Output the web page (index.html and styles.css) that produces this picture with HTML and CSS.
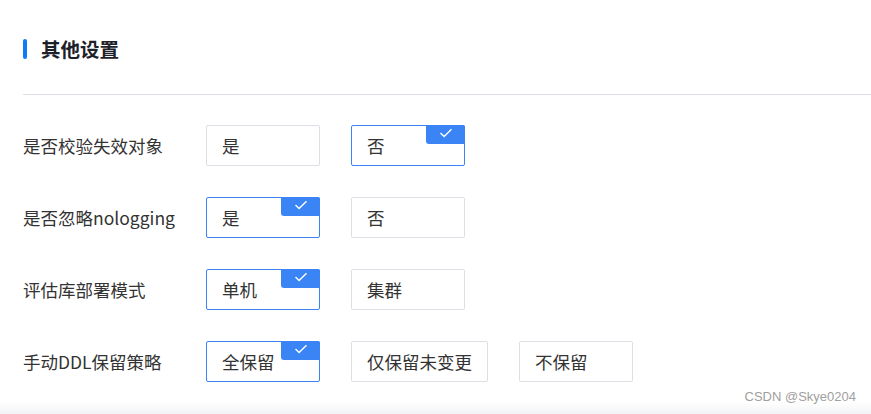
FILE: index.html
```html
<!DOCTYPE html>
<html lang="zh-CN">
<head>
    <meta charset="UTF-8">
    <meta name="viewport" content="width=device-width, initial-scale=1.0">
    <title>其他设置</title>
    <link rel="stylesheet" href="styles.css">
</head>
<body>
    <div class="panel">
        <!-- 标题 -->
        <div class="panel-title">
            <span class="title-bar"></span>
            <h2>其他设置</h2>
        </div>
        <div class="divider"></div>

        <div class="form-row">
            <div class="label">是否校验失效对象</div>
            <div class="options">
                <div class="option">是</div>
                <div class="option checked">否</div>
            </div>
        </div>
        <div class="form-row">
            <div class="label">是否忽略nologging</div>
            <div class="options">
                <div class="option checked">是</div>
                <div class="option">否</div>
            </div>
        </div>
        <div class="form-row">
            <div class="label">评估库部署模式</div>
            <div class="options">
                <div class="option checked">单机</div>
                <div class="option">集群</div>
            </div>
        </div>
        <div class="form-row">
            <div class="label">手动DDL保留策略</div>
            <div class="options">
                <div class="option checked">全保留</div>
                <div class="option">仅保留未变更</div>
                <div class="option">不保留</div>
            </div>
        </div>
    </div>
    <div class="footer"></div>
    <span class="watermark">CSDN @Skye0204</span>
</body>
</html>
```

FILE: styles.css
```css
html, body {
    height: 100%;
    overflow: hidden;
}
body {
    position: relative;
    margin: 0;
    background: #fff;
    font-family: "Noto Sans CJK SC", "Noto Sans", sans-serif;
    color: #333;
}
.panel {
    padding: 39px 0 0 23px;
}
.panel-title {
    display: flex;
    align-items: center;
    height: 20px;
}
.title-bar {
    width: 4px;
    height: 20px;
    border-radius: 2px;
    background-color: #0f7bfa;
}
.panel-title h2 {
    margin: 0 0 0 14px;
    font-size: 19.5px;
    font-weight: bold;
    color: #1d2129;
    line-height: 20px;
}
.divider {
    height: 1px;
    background-color: #dcdfe6;
    margin-top: 35px;
    margin-bottom: 30px;
}
.form-row {
    display: flex;
    align-items: center;
    margin-bottom: 31px;
}
.form-row:last-child {
    margin-bottom: 0;
}
.label {
    width: 183px;
    font-size: 17.5px;
    color: #333;
}
.options {
    display: flex;
    gap: 31px;
}
.option {
    position: relative;
    box-sizing: border-box;
    height: 41px;
    min-width: 114px;
    padding: 0 15px;
    border: 1px solid #dcdfe6;
    border-radius: 2px;
    font-size: 17.5px;
    line-height: 39px;
    color: #333;
}
.option.checked {
    border-color: #3a84f6;
}
/* 右上角勾选标记 */
.option.checked::after {
    content: "";
    position: absolute;
    top: -1px;
    right: -1px;
    width: 39px;
    height: 19px;
    background: #3a84f6 url("data:image/svg+xml,%3Csvg xmlns='http://www.w3.org/2000/svg' width='14' height='10' viewBox='0 0 14 10'%3E%3Cpath d='M1.5 5l3.6 3.5L12.5 1.2' fill='none' stroke='%23fff' stroke-width='1.4'/%3E%3C/svg%3E") no-repeat center 3px;
    border-radius: 0 2px 0 3px;
}
.footer {
    margin-top: 20px;
    height: 12px;
    background: linear-gradient(to bottom, #fff 0, #f2f3f4 12px);
}
/* 水印 */
.watermark {
    position: absolute;
    right: 15px;
    top: 389px;
    font-family: "Liberation Sans", Arial, sans-serif;
    font-size: 13px;
    color: #a0a0a0;
}
```
